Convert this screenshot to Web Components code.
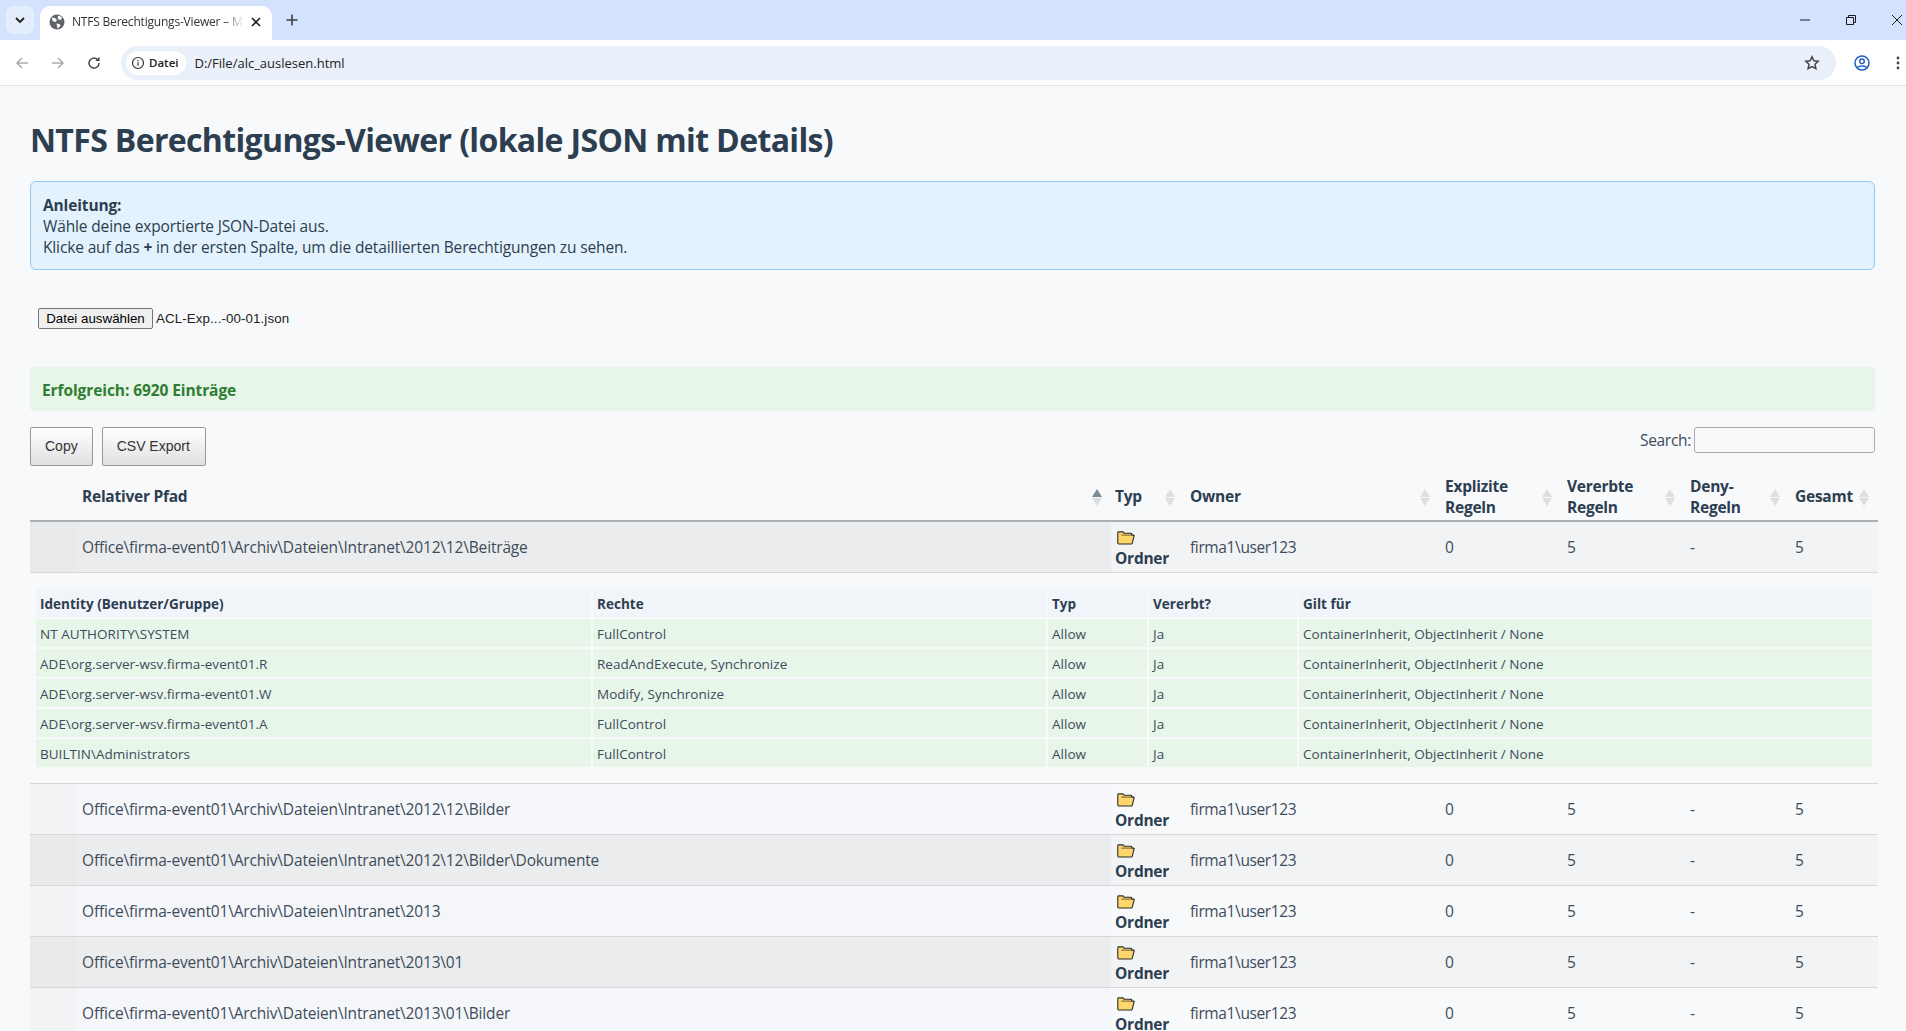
<!DOCTYPE html>
<html lang="de">
<head>
<meta charset="utf-8">
<title>NTFS Berechtigungs-Viewer</title>
<style>
  html, body { margin: 0; padding: 0; height: 100%; overflow: hidden; background: #f8f9fa; }
  body { font-family: "Open Sans", "Noto Sans", sans-serif; color: #2c3e50; }
</style>
</head>
<body>
<browser-chrome></browser-chrome>
<acl-page></acl-page>

<template id="chrome-tpl">
  <style>
    :host { display: block; font-family: "Open Sans", sans-serif; }
    .strip { height: 40px; background: #d3e3fd; display: flex; align-items: flex-end; padding-left: 6px; }
    .tabs-btn { width: 28px; height: 28px; background: #e4edfc; border-radius: 8px; margin-bottom: 6px; display: flex; align-items: center; justify-content: center; }
    .tab { width: 232px; height: 34px; margin-left: 6px; background: #fff; border-radius: 10px 10px 0 0; display: flex; align-items: center; padding: 0 11px 2px 9px; box-sizing: border-box; font-size: 12px; color: #333; gap: 7px; }
    .tab span { flex: 1; white-space: nowrap; overflow: hidden; letter-spacing: -.2px; padding-bottom: 2px; -webkit-mask-image: linear-gradient(90deg, #000 88%, transparent); }
    .plus { margin: 0 0 6px 14px; height: 28px; display: flex; align-items: center; }
    .win { margin-left: auto; display: flex; height: 40px; align-items: center; }
    .win svg { display: block; }
    .bar { height: 46px; background: #fff; border-bottom: 1px solid #e2e3e5; display: flex; align-items: center; box-sizing: border-box; padding-left: 15px; }
    .nav { display: flex; width: 106px; gap: 22px; align-items: center; }
    .omni { flex: 1; height: 34px; background: #eaf0fa; border-radius: 17px; display: flex; align-items: center; padding: 0 6px 0 5px; font-size: 13px; color: #222; }
    .chip { height: 24px; border-radius: 12px; background: #fff; display: flex; align-items: center; gap: 4px; padding: 0 8px 0 5px; font-size: 11.5px; font-weight: 600; margin-right: 8px; }
    .url { flex: 1; }
    .right { display: flex; align-items: center; width: 70px; box-sizing: border-box; justify-content: flex-end; padding-right: 6px; }
  </style>
  <div class="strip">
    <div class="tabs-btn"><svg width="10" height="7" viewBox="0 0 10 7"><path d="M1 1l4 4 4-4" fill="none" stroke="#1f1f1f" stroke-width="1.8"/></svg></div>
    <div class="tab">
      <svg width="16" height="16" viewBox="0 0 16 16"><circle cx="8" cy="8" r="7.5" fill="#5f6368"/><path d="M3 3.500l3 .5 2 2-1.500 2-3-1zM10 1.500l3 2-1 2.500-2.500-.5-1-2.500zM7.500 9.500l3 .5 1 2-3 2.500-.5-2.500z" fill="#fff"/></svg>
      <span>NTFS Berechtigungs-Viewer – M</span>
      <svg width="10" height="10" viewBox="0 0 10 10"><path d="M1 1l8 8M9 1l-8 8" stroke="#222" stroke-width="1.600"/></svg>
    </div>
    <div class="plus"><svg width="12" height="12" viewBox="0 0 12 12"><path d="M6 .5v11M.5 6h11" stroke="#3c4043" stroke-width="1.600"/></svg></div>
    <div class="win">
      <svg width="46" height="20" viewBox="0 0 46 20"><path d="M18 10h10" stroke="#1a1a1a" stroke-width="1"/></svg>
      <svg width="46" height="20" viewBox="0 0 46 20"><path d="M18.500 7.500h7v7h-7zM20.500 7.500v-2h7v7h-2" fill="none" stroke="#1a1a1a" stroke-width="1"/></svg>
      <svg width="32" height="20" viewBox="0 0 32 20"><path d="M18 5l10 10M28 5l-10 10" stroke="#1a1a1a" stroke-width="1"/></svg>
    </div>
  </div>
  <div class="bar">
    <div class="nav">
      <svg width="14" height="14" viewBox="0 0 14 14"><path d="M13 7H2M7 2L2 7l5 5" fill="none" stroke="#a9abae" stroke-width="1.500"/></svg>
      <svg width="14" height="14" viewBox="0 0 14 14"><path d="M1 7h11M7 2l5 5-5 5" fill="none" stroke="#a9abae" stroke-width="1.500"/></svg>
      <svg width="14" height="14" viewBox="0 0 14 14"><path d="M12 7a5 5 0 1 1-1.500-3.500" fill="none" stroke="#444" stroke-width="1.500"/><path d="M12.500 .8v4.200H8.300z" fill="#444"/></svg>
    </div>
    <div class="omni">
      <div class="chip">
        <svg width="14" height="14" viewBox="0 0 14 14"><circle cx="7" cy="7" r="5.500" fill="none" stroke="#333" stroke-width="1.200"/><path d="M7 6.200v3.600M7 4v1.300" stroke="#333" stroke-width="1.200"/></svg>
        Datei
      </div>
      <div class="url">D:/File/alc_auslesen.html</div>
      <svg width="16" height="16" viewBox="0 0 16 16" style="margin-right:10px"><path d="M8 1.800l1.900 4 4.300.5-3.200 3 .9 4.300L8 11.500l-3.900 2.100.9-4.300-3.200-3 4.300-.5z" fill="none" stroke="#444" stroke-width="1.500"/></svg>
    </div>
    <div class="right">
      <svg width="16" height="16" viewBox="0 0 16 16" style="margin-right:26px"><circle cx="8" cy="8" r="7" fill="none" stroke="#1f5fbf" stroke-width="1.500"/><circle cx="8" cy="6.300" r="2.300" fill="none" stroke="#1f5fbf" stroke-width="1.400"/><path d="M3.300 12.500c1.500-2 7.900-2 9.400 0" fill="none" stroke="#1f5fbf" stroke-width="1.400"/></svg>
      <svg width="4" height="14" viewBox="0 0 4 14"><circle cx="2" cy="2" r="1.400" fill="#444"/><circle cx="2" cy="7" r="1.400" fill="#444"/><circle cx="2" cy="12" r="1.400" fill="#444"/></svg>
    </div>
  </div>
</template>

<template id="page-tpl">
  <style>
    :host { display: block; padding: 0 28px 0 30px; color: #2c3e50; }
    h1 { margin: 0; padding-top: 33px; font-size: 32px; line-height: 42px; font-weight: 700; letter-spacing: -.65px; color: #2c3e50; height: 61px; }
    .info { margin-top: 1px; margin-right: 3px; height: 89px; box-sizing: border-box; background: #e3f2fd; border: 1px solid #90caf9; border-radius: 6px; padding: 13px 12px; font-size: 15.5px; line-height: 21px; letter-spacing: -.14px; }
    .file { margin-top: 38px; padding-left: 8px; display: flex; align-items: center; height: 21px; font-family: "Liberation Sans", sans-serif; font-size: 13.333px; color: #222; gap: 3px; }
    .file span { letter-spacing: .1px; }
    .file button { height: 21px; width: 115px; padding: 0; font: inherit; color: #000; background: #efefef; border: 1px solid #767676; border-radius: 2px; }
    .ok { margin-top: 38px; margin-right: 3px; height: 44px; background: #e8f5e9; border-radius: 4px; display: flex; align-items: center; padding: 1px 0 0 12px; box-sizing: border-box; color: #2e7d32; font-size: 15.5px; font-weight: 700; letter-spacing: -.09px; }
    .tools { margin-top: 16px; display: flex; align-items: flex-start; height: 48px; margin-right: 3px; }
    .tools button { height: 39px; box-sizing: border-box; padding: 0 14px 2px; margin-right: 9px; font-family: "Liberation Sans", sans-serif; font-size: 14px; color: #333; border: 1px solid #999; border-radius: 2px; background: linear-gradient(#fff, #e0e0e0); }
    .tools button + button { padding: 0 15px 2px 14px; }
    .search { margin-left: auto; display: flex; align-items: center; gap: 3px; font-size: 15.5px; line-height: 21px; letter-spacing: -.3px; height: 26px; color: #3d4c5a; }
    .search input { width: 181px; height: 26px; box-sizing: border-box; border: 1px solid #aaa; border-radius: 3px; background: transparent; padding: 0; margin: 0; }
  </style>
  <h1>NTFS Berechtigungs-Viewer (lokale JSON mit Details)</h1>
  <div class="info"><b>Anleitung:</b><br>Wähle deine exportierte JSON-Datei aus.<br>Klicke auf das <b>+</b> in der ersten Spalte, um die detaillierten Berechtigungen zu sehen.</div>
  <div class="file"><button>Datei auswählen</button><span>ACL-Exp...-00-01.json</span></div>
  <div class="ok">Erfolgreich: 6920 Einträge</div>
  <div class="tools">
    <button>Copy</button><button>CSV Export</button>
    <label class="search">Search:<input type="text"></label>
  </div>
  <acl-table></acl-table>
</template>

<script>
const COLS = "47px 1034px 73px 255px 122px 123px 105px 89px";

class BrowserChrome extends HTMLElement {
  constructor() {
    super();
    this.attachShadow({ mode: "open" });
    this.shadowRoot.append(document.getElementById("chrome-tpl").content.cloneNode(true));
  }
}

class AclPage extends HTMLElement {
  constructor() {
    super();
    this.attachShadow({ mode: "open" });
    this.shadowRoot.append(document.getElementById("page-tpl").content.cloneNode(true));
  }
}

class AclTable extends HTMLElement {
  constructor() {
    super();
    this.attachShadow({ mode: "open" });
    this.render();
  }

  render() {
    const heads = [
      ["", false], ["Relativer Pfad", "asc"], ["Typ", true], ["Owner", true],
      ["Explizite<br>Regeln", true], ["Vererbte<br>Regeln", true], ["Deny-<br>Regeln", true], ["Gesamt", true],
    ];
    const paths = [
      "Office\\firma-event01\\Archiv\\Dateien\\Intranet\\2012\\12\\Bilder",
      "Office\\firma-event01\\Archiv\\Dateien\\Intranet\\2012\\12\\Bilder\\Dokumente",
      "Office\\firma-event01\\Archiv\\Dateien\\Intranet\\2013",
      "Office\\firma-event01\\Archiv\\Dateien\\Intranet\\2013\\01",
      "Office\\firma-event01\\Archiv\\Dateien\\Intranet\\2013\\01\\Bilder",
    ];
    const perms = [
      ["NT AUTHORITY\\SYSTEM", "FullControl"],
      ["ADE\\org.server-wsv.firma-event01.R", "ReadAndExecute, Synchronize"],
      ["ADE\\org.server-wsv.firma-event01.W", "Modify, Synchronize"],
      ["ADE\\org.server-wsv.firma-event01.A", "FullControl"],
      ["BUILTIN\\Administrators", "FullControl"],
    ];
    const head = heads.map(([t, sort], i) => {
      const cls = sort === "asc" ? "sort asc" : sort ? "sort" : "";
      const label = i === 0 ? "" : `<span>${t}</span>`;
      return `<div class="th ${cls} c${i}">${label}${sort ? "<i></i>" : ""}</div>`;
    }).join("");
    const row = (p, even) => `<acl-row ${even ? "even" : ""} path="${p}"></acl-row>`;
    this.shadowRoot.innerHTML = `
      <style>
        :host { display: block; }
        .head { display: grid; grid-template-columns: ${COLS}; height: 45px; border-bottom: 2px solid #adb0b3; }
        .th { position: relative; display: flex; align-items: center; padding: 0 0 2px 6px; box-sizing: border-box; font-size: 15.5px; line-height: 21px; font-weight: 700; letter-spacing: -.25px; color: #2c3e50; }
        .th.c1 { padding-left: 5px; }
        .th.c2 { padding-left: 4px; }
        .th i { position: absolute; right: 9px; top: 50%; margin-top: -9px; width: 10px; height: 17px; }
        .th i::before, .th i::after { content: ""; position: absolute; left: 0; border-left: 5px solid transparent; border-right: 5px solid transparent; }
        .th i::before { top: 0; border-bottom: 8.5px solid #dcdee0; }
        .th i::after { bottom: 0; border-top: 8.5px solid #dcdee0; }
        .th.asc i::before { border-bottom-color: #7c8a96; }
        .detail { padding: 16px 6px; height: 178px; border-bottom: 1px solid #d5d7d9; }
      </style>
      <div class="head">${head}</div>
      <acl-row even path="Office\\firma-event01\\Archiv\\Dateien\\Intranet\\2012\\12\\Beiträge"></acl-row>
      <div class="detail"><perm-table></perm-table></div>
      ${paths.map((p, i) => row(p, i % 2 === 1)).join("")}
    `;
    this.shadowRoot.querySelector("perm-table").perms = perms;
  }
}

class AclRow extends HTMLElement {
  constructor() {
    super();
    this.attachShadow({ mode: "open" });
  }

  connectedCallback() {
    const path = this.getAttribute("path");
    this.shadowRoot.innerHTML = `
      <style>
        :host { display: grid; grid-template-columns: ${COLS}; height: 50px; border-bottom: 1px solid #d5d7d9; font-size: 15.5px; letter-spacing: -.17px; color: #3d4c5a; --a: #f2f3f4; --b: #f5f6fa; --c: #f8f9fa; }
        :host([even]) { --a: #e9eaec; --b: #ebecee; --c: #f2f3f5; }
        div { display: flex; align-items: center; padding-left: 6px; white-space: nowrap; background: var(--c); }
        .ctl { background: var(--a); }
        .path { background: var(--b); padding-left: 5px; }
        .owner { letter-spacing: -.37px; }
        .typ { flex-direction: column; align-items: flex-start; justify-content: center; padding: 5px 0 0 4px; box-sizing: border-box; font-weight: 700; color: #2c3e50; line-height: 21px; letter-spacing: -.25px; }
        svg { display: block; margin: 0 0 3px 2px; }
      </style>
      <div class="ctl"></div>
      <div class="path">${path}</div>
      <div class="typ"><svg width="18" height="14" viewBox="0 0 18 14"><path d="M2.400 13H1.700c-.5 0-.9-.4-.9-.9V1.800c0-.5.4-.9.9-.9h4.400l1.200 1.400h6.600c.5 0 .9.4.9.9v.9h2c.3 0 .5.200.4.500L15.200 12.300c-.1.400-.5.700-.9.700z" fill="#ffd66b" stroke="#2b2b2b" stroke-width="1.100" stroke-linejoin="round"/><path d="M14.800 4.100H4.300" stroke="#2b2b2b" stroke-width=".7" fill="none"/></svg>Ordner</div>
      <div class="owner">firma1\\user123</div>
      <div>0</div><div>5</div><div>-</div><div>5</div>
    `;
  }
}

class PermTable extends HTMLElement {
  constructor() {
    super();
    this.attachShadow({ mode: "open" });
  }

  set perms(list) {
    const cells = ["Identity (Benutzer/Gruppe)", "Rechte", "Typ", "Vererbt?", "Gilt für"].map(t => `<div class="h">${t}</div>`).join("");
    const rows = list.map(([who, right]) => [who, right, "Allow", "Ja", "ContainerInherit, ObjectInherit / None"].map(t => `<div class="c">${t}</div>`).join("")).join("");
    this.shadowRoot.innerHTML = `
      <style>
        :host { display: grid; grid-template-columns: 555px 453px 99px 148px 1fr; gap: 2px; font-size: 13.5px; letter-spacing: .03px; color: #3d4c5a; grid-auto-rows: 28px; }
        div { display: flex; align-items: center; padding: 1px 0 0 4px; box-sizing: border-box; white-space: nowrap; }
        .h { background: #f1f4f9; font-weight: 700; color: #2c3e50; }
        .c { background: #e8f5e9; }
      </style>
      ${cells}${rows}
    `;
  }
}

customElements.define("browser-chrome", BrowserChrome);
customElements.define("perm-table", PermTable);
customElements.define("acl-row", AclRow);
customElements.define("acl-table", AclTable);
customElements.define("acl-page", AclPage);
</script>
</body>
</html>
